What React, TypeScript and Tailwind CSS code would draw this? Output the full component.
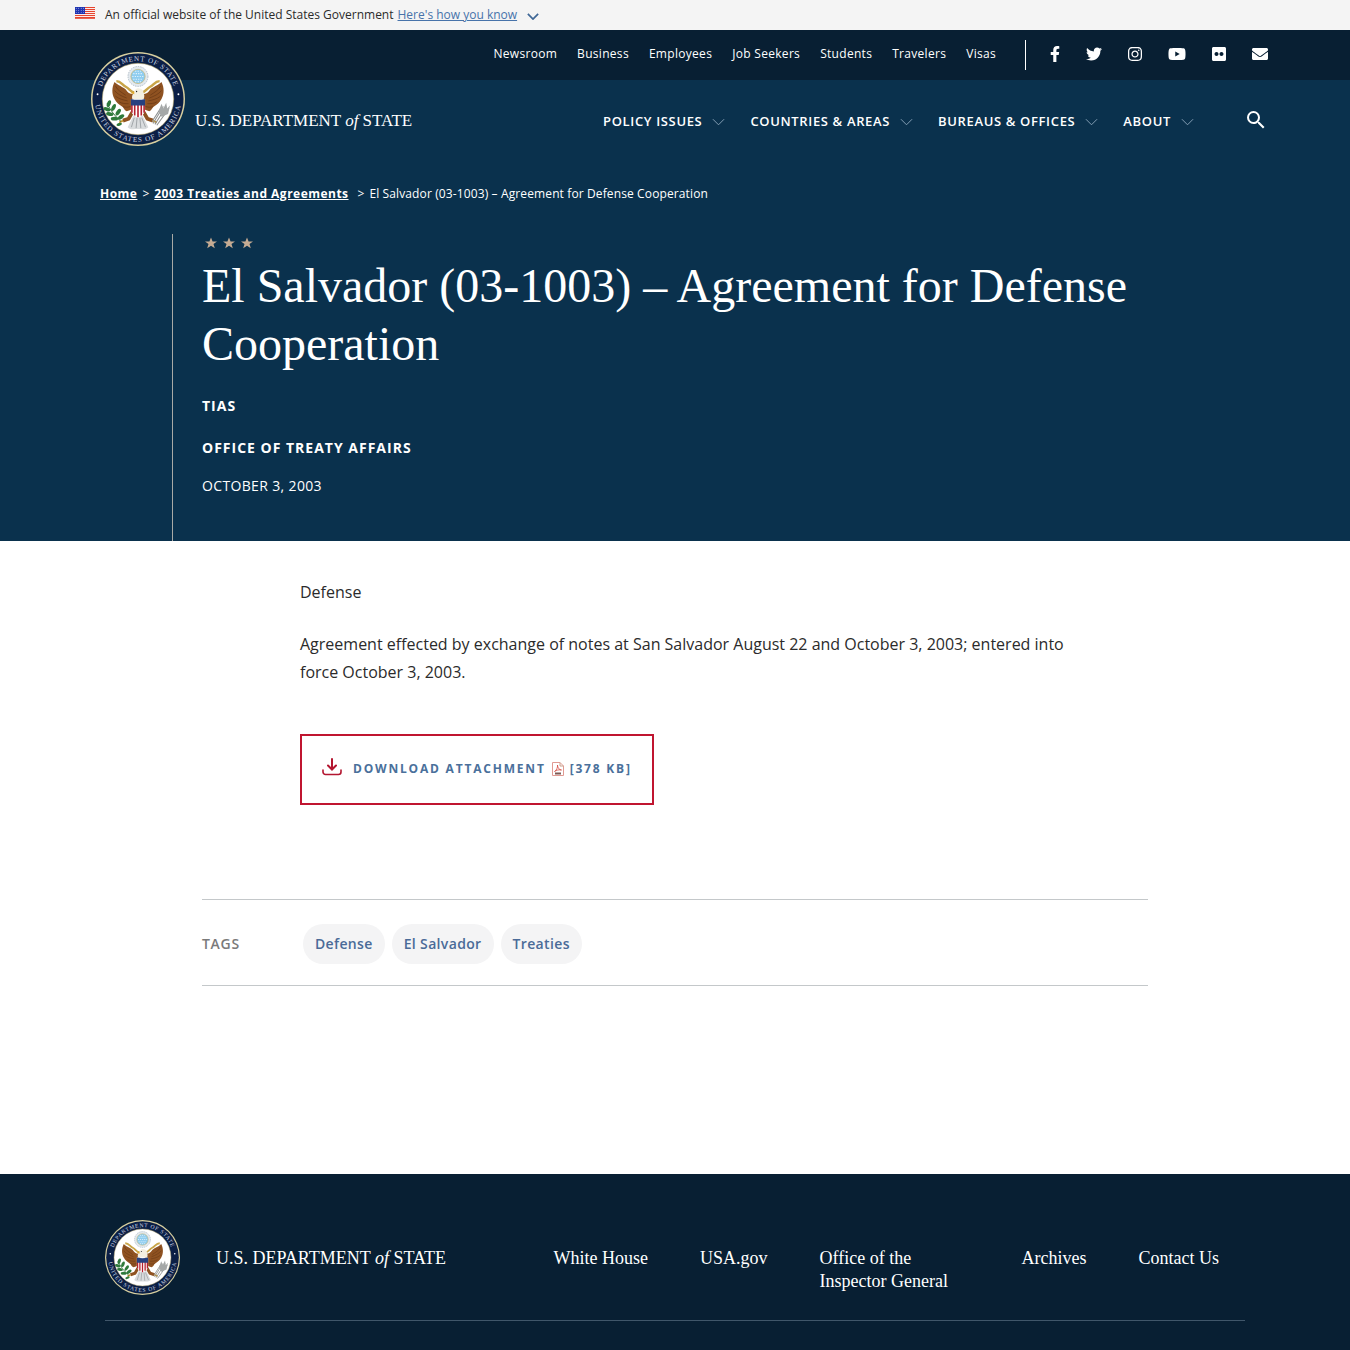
import { useId } from "react";
import { FaEnvelope, FaFacebookF, FaFlickr, FaInstagram, FaTwitter, FaYoutube } from "react-icons/fa";
import { MdSearch } from "react-icons/md";

const utilityLinks = ["Newsroom", "Business", "Employees", "Job Seekers", "Students", "Travelers", "Visas"];
const mainLinks = ["Policy Issues", "Countries & Areas", "Bureaus & Offices", "About"];
const tags = ["Defense", "El Salvador", "Treaties"];
const footerLinks = ["White House", "USA.gov", "Office of the Inspector General", "Archives", "Contact Us"];
const socialLinks = [
  { label: "Facebook", Icon: FaFacebookF, size: "h-4 w-2.5" },
  { label: "Twitter", Icon: FaTwitter, size: "h-4 w-4" },
  { label: "Instagram", Icon: FaInstagram, size: "h-4 w-3.5" },
  { label: "YouTube", Icon: FaYoutube, size: "h-4 w-[18px]" },
  { label: "Flickr", Icon: FaFlickr, size: "h-4 w-3.5" },
  { label: "Email", Icon: FaEnvelope, size: "h-4 w-4" },
];

function Flag() {
  return (
    <svg viewBox="0 0 20 12" className="mb-1 h-3 w-5 shrink-0" aria-hidden="true">
      <rect width="20" height="12" fill="#fff" />
      {[0, 2, 4, 6, 8, 10].map((y) => (
        <rect key={y} y={y} width="20" height="1.1" fill="#e5452f" />
      ))}
      <rect y="11.2" width="20" height="0.8" fill="#e5452f" />
      <rect width="10" height="7" fill="#1e33b1" />
      {[1.2, 3.4, 5.6].map((y) =>
        [1.2, 3.7, 6.2, 8.7].map((x) => <circle key={`${x}-${y}`} cx={x} cy={y} r="0.45" fill="#fff" />)
      )}
    </svg>
  );
}

function Chevron({ className }: { className: string }) {
  return (
    <svg viewBox="0 0 14 8" className={className} fill="none" stroke="currentColor" aria-hidden="true">
      <path d="M1 1l6 6 6-6" />
    </svg>
  );
}

function Wing() {
  return (
    <g>
      <path
        d="M25 32c-3 6-3 13 0 18c2 4 5 6 8 8c2 1 2 4 5 5l6-2l3-11l-2-5c-4 0-6-2-8-5c-3-3-8-4-12-8z"
        fill="#8f5221"
      />
      <path
        d="M26 36c2 5 7 7 11 10M25 41c3 4 8 6 13 8M26 47c4 3 8 4 13 5M30 53c3 2 6 2 10 2M34 58c2 1 5 1 8 0"
        stroke="#6b3a15"
        strokeWidth="0.8"
        fill="none"
      />
    </g>
  );
}

function Seal({ className }: { className: string }) {
  const id = useId();
  return (
    <svg viewBox="0 0 100 100" className={className} role="img" aria-label="Seal of the Department of State">
      <circle cx="50" cy="50" r="50" fill="#d8cf9f" />
      <circle cx="50" cy="50" r="48.4" fill="#0b1f45" />
      <circle cx="50" cy="50" r="38" fill="#fff" stroke="#b9a76a" strokeWidth="0.6" />
      <path id={`${id}top`} d="M9.5 50a40.5 40.5 0 0 1 81 0" fill="none" />
      <path id={`${id}bottom`} d="M4.2 50a45.8 45.8 0 0 0 91.6 0" fill="none" />
      <g fill="#cdd6e3" fontFamily="'Liberation Serif', serif" fontSize="7.6" textAnchor="middle">
        <text letterSpacing="0.8">
          <textPath href={`#${id}top`} startOffset="50%">DEPARTMENT OF STATE</textPath>
        </text>
        <text letterSpacing="1.1">
          <textPath href={`#${id}bottom`} startOffset="50%">UNITED STATES OF AMERICA</textPath>
        </text>
      </g>
      <circle cx="7" cy="45" r="1" fill="#fff" />
      <circle cx="93" cy="45" r="1" fill="#fff" />

      {/* glory of stars above the eagle */}
      <circle cx="50" cy="26" r="10.6" fill="#e3e9ee" stroke="#a9b6c0" strokeWidth="0.9" strokeDasharray="1.6 1" />
      <circle cx="50" cy="26" r="7.6" fill="#8fcdf0" stroke="#c9b36a" strokeWidth="0.7" />
      <path d="M45 23h10M44 26h12M45 29h10M47 20.5h6M47 31.5h6" stroke="#e9f6fd" strokeWidth="1.2" strokeDasharray="1.2 1.4" />

      {/* eagle */}
      <Wing />
      <g transform="matrix(-1 0 0 1 100 0)">
        <Wing />
      </g>
      <path d="M44 64l-4 7l-6 2M56 64l4 7l6 2" stroke="#8f5221" strokeWidth="4" fill="none" />
      <path d="M34 73l-4 2M66 73l4 2" stroke="#c8952c" strokeWidth="2" />
      <path d="M45 68h10l6 12c-3 3-6 2-11 2s-8 1-11-2z" fill="#d9dcde" />
      <path d="M46 70l-3 10M49 70l-1 11M52 70l1 11M54 70l4 10" stroke="#8f9498" strokeWidth="0.8" />
      <path d="M27 31c5 0 6 4 10 6s5 6 9 6" stroke="#c9a548" strokeWidth="2.6" fill="none" />
      <path d="M73 31c-5 0-6 4-10 6s-5 6-9 6" stroke="#c9a548" strokeWidth="2.6" fill="none" />
      <path d="M44 50c-1-3 0-5 2-7c1-4 3-5 6-4c3 0 4 3 4 5c1 2 1 4 0 6z" fill="#f3efe2" />
      <path d="M46 42l-4 1.6l4 1.4z" fill="#e0a92e" />
      <circle cx="48.5" cy="42" r="0.7" fill="#222" />

      {/* shield */}
      <path d="M42.5 50h15v11c0 5-3.5 7.5-7.5 9c-4-1.5-7.5-4-7.5-9z" fill="#fff" />
      <path d="M43.5 56v8.5M46.5 56v11.5M50 56v13.5M53.5 56v11.5M56.5 56v8.5" stroke="#b5202e" strokeWidth="1.7" />
      <path d="M42.5 50c5 1.2 10 1.2 15 0v7h-15z" fill="#26407f" />

      {/* olive branch */}
      <path d="M17 55c4 7 8 13 15 19" stroke="#2c6b34" strokeWidth="1" fill="none" />
      <g fill="#2f7a3b">
        <ellipse cx="19" cy="55" rx="2" ry="3.8" transform="rotate(20 19 55)" />
        <ellipse cx="17" cy="61" rx="3.8" ry="2" transform="rotate(20 17 61)" />
        <ellipse cx="24" cy="59" rx="2" ry="4" transform="rotate(25 24 59)" />
        <ellipse cx="20" cy="66" rx="4" ry="2" transform="rotate(10 20 66)" />
        <ellipse cx="29" cy="64" rx="2" ry="4" transform="rotate(35 29 64)" />
        <ellipse cx="25" cy="71" rx="4" ry="2" />
        <ellipse cx="32" cy="69" rx="2" ry="3.8" transform="rotate(55 32 69)" />
        <ellipse cx="30" cy="77" rx="3" ry="1.5" transform="rotate(-20 30 77)" />
      </g>

      {/* arrows */}
      <path d="M66 76l11-18M68 77l12-19M70 78l13-18M65 74l9-14" stroke="#8d9091" strokeWidth="1.1" />
      <path d="M72 63l3-8l2 5l3-6l1 6l3-3l-2 9l-7 3z" fill="#a5a8a8" />
    </svg>
  );
}

function Wordmark({ className }: { className: string }) {
  return (
    <span className={className}>
      U.S. DEPARTMENT <em>of</em> STATE
    </span>
  );
}

function DownloadIcon() {
  return (
    <svg
      viewBox="0 0 20 18"
      className="mb-1 h-[18px] w-5 shrink-0 text-[#b31630]"
      fill="none"
      stroke="currentColor"
      strokeWidth="2"
      strokeLinecap="round"
      aria-hidden="true"
    >
      <path d="M10 1v10M6 7.500l4 4l4-4" />
      <path d="M1 12v2a2.500 2.500 0 0 0 2.500 2.500h13a2.500 2.500 0 0 0 2.500-2.500v-2" strokeWidth="1.600" />
    </svg>
  );
}

function PdfIcon() {
  return (
    <svg viewBox="0 0 12 14" className="h-3.5 w-3 shrink-0" fill="none" aria-hidden="true">
      <path d="M0.500 0.500h7.500l3.500 3.500v9.500h-11z" fill="#fff" stroke="#e09a92" />
      <path d="M8 0.500v3.500h3.500" stroke="#c9a08c" />
      <path d="M2.500 9.500c2-1 3.300-4 3-6.500c0 3 2 5 4 5c-2.500-0.500-5 0-7 1.500z" stroke="#d64b43" strokeWidth="0.800" />
      <rect x="3" y="10.500" width="6" height="2" fill="#7d5a55" />
    </svg>
  );
}

export default function App() {
  return (
    <div className="flex min-h-screen flex-col bg-white font-['Open_Sans',sans-serif] text-[#2b2b2b]">
      <div className="bg-[#f4f4f4]">
        <div className="mx-auto flex h-[30px] max-w-[1200px] items-center text-xs">
          <Flag />
          <span className="ml-2.5">An official website of the United States Government</span>
          <button type="button" className="ml-1 flex items-center text-[#4773aa]">
            <span className="underline">Here's how you know</span>
            <Chevron className="ml-2.5 mt-0.5 h-[7px] w-3 stroke-2 text-[#3f6796]" />
          </button>
        </div>
      </div>

      <header className="bg-[#0a314d] text-white">
        <div className="bg-[#081f33]">
          <div className="mx-auto flex h-[50px] max-w-[1200px] items-center justify-end pr-[7px]">
            <nav aria-label="Utility" className="flex gap-5 pb-0.5 text-xs tracking-wide">
              {utilityLinks.map((link) => (
                <a key={link} href="#">{link}</a>
              ))}
            </nav>
            <div className="ml-[29px] flex h-[30px] items-center gap-[26px] border-l border-white pl-6">
              {socialLinks.map(({ label, Icon, size }) => (
                <a key={label} href="#" aria-label={label} className="pb-0.5">
                  <Icon className={size} />
                </a>
              ))}
            </div>
          </div>
        </div>

        <div className="mx-auto flex h-[86px] max-w-[1200px] items-start justify-between pr-[7px]">
          <a href="#" className="relative -mt-7 ml-4 flex items-end">
            <Seal className="size-[94px]" />
            <Wordmark className="mb-[13px] ml-2.5 whitespace-nowrap font-['Liberation_Serif',serif] text-[17px]" />
          </a>
          <div className="mt-7 flex items-center">
            <nav aria-label="Main" className="flex gap-[25px]">
              {mainLinks.map((link) => (
                <button key={link} type="button" className="flex items-center gap-2.5 pt-1 text-[13px] font-semibold uppercase tracking-wider">
                  {link}
                  <Chevron className="h-2 w-[13px] text-[#8ba5bb]" />
                </button>
              ))}
            </nav>
            <button type="button" aria-label="Search" className="ml-[50px]">
              <MdSearch className="size-6" />
            </button>
          </div>
        </div>

        <nav aria-label="Breadcrumb" className="mx-auto max-w-[1150px] pt-[18px]">
          <ol className="flex gap-[5px] text-xs leading-5">
            <li><a href="#" className="font-bold tracking-[0.04em] underline">Home</a></li>
            <li aria-hidden="true">&gt;</li>
            <li className="mr-1"><a href="#" className="font-bold tracking-[0.04em] underline">2003 Treaties and Agreements</a></li>
            <li aria-hidden="true">&gt;</li>
            <li className="tracking-[0.01em]">El Salvador (03-1003) – Agreement for Defense Cooperation</li>
          </ol>
        </nav>

        <div className="mx-auto mt-[30px] max-w-[1006px] border-l border-[#a9aaa6] pb-[45px] pl-[29px]">
          <svg viewBox="0 0 50 18" className="ml-0.5 h-[18px] w-[50px]" fill="#c5ab93" aria-hidden="true">
            {[7, 25, 43].map((x) => (
              <path key={x} transform={`translate(${x} 9.5)`} d="M0-6l1.6 4h4.4l-3.5 2.6l1.3 4.2l-3.8-2.5l-3.8 2.5l1.3-4.2l-3.5-2.6h4.4z" />
            ))}
          </svg>
          <h1 className="mt-[5px] font-['Liberation_Serif',serif] text-5xl leading-[58px]">
            El Salvador (03-1003) – Agreement for Defense Cooperation
          </h1>
          <p className="mt-[23px] text-sm font-bold tracking-[1px]">TIAS</p>
          <p className="mt-[22px] text-sm font-bold tracking-[1px]">OFFICE OF TREATY AFFAIRS</p>
          <p className="mt-[18px] text-sm tracking-wide">OCTOBER 3, 2003</p>
        </div>
      </header>

      <main className="mx-auto w-full max-w-[946px] pb-[188px] pt-[37px]">
        <article className="ml-[98px] max-w-[780px] leading-7">
          <p>Defense</p>
          <p className="mt-6">
            Agreement effected by exchange of notes at San Salvador August 22 and October 3, 2003; entered into force
            October 3, 2003.
          </p>
          <a
            href="#"
            className="mt-12 inline-flex h-[71px] items-center border-2 border-[#c01530] px-5 pb-0.5 text-xs font-bold tracking-[0.15em] text-[#4a709b]"
          >
            <DownloadIcon />
            <span className="ml-[11px]">DOWNLOAD ATTACHMENT</span>
            <span className="ml-1.5 flex items-center gap-1.5">
              <PdfIcon />
              [378 KB]
            </span>
          </a>
        </article>
        <section aria-label="Tags" className="mt-[94px] flex h-[87px] items-center border-y border-[#c4c8ca] pt-0.5">
          <h2 className="w-[101px] text-sm font-semibold tracking-wider text-[#7a7a7a]">TAGS</h2>
          <ul className="flex gap-[7px]">
            {tags.map((tag) => (
              <li key={tag}>
                <a href="#" className="block rounded-full bg-[#f4f4f5] px-3 py-2.5 text-sm font-semibold tracking-wide text-[#4a6b98]">
                  {tag}
                </a>
              </li>
            ))}
          </ul>
        </section>
      </main>

      <footer className="grow bg-[#081f33] pt-[46px] text-white">
        <div className="mx-auto flex max-w-[1140px] items-start justify-between border-b border-[#40566a] pb-[25px] font-['Liberation_Serif',serif] text-lg">
          <a href="#" className="flex items-center gap-9">
            <Seal className="size-[75px]" />
            <Wordmark className="whitespace-nowrap" />
          </a>
          <nav aria-label="Footer" className="mt-[27px] flex leading-[23px]">
            {footerLinks.map((link) => (
              <a key={link} href="#" className="box-content max-w-[150px] px-[26px]">{link}</a>
            ))}
          </nav>
        </div>
      </footer>
    </div>
  );
}
